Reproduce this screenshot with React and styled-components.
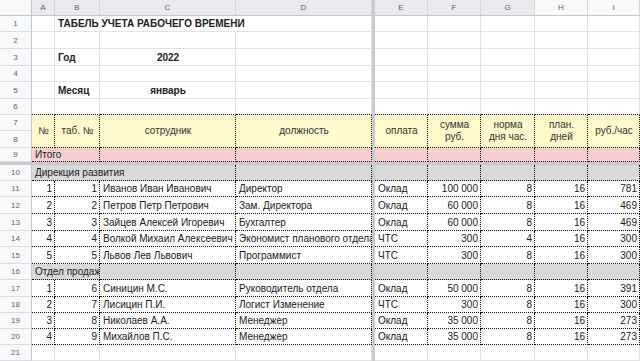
import React from 'react';
import styled, { createGlobalStyle } from 'styled-components';

const GlobalStyle = createGlobalStyle`
  html, body {
    margin: 0;
    padding: 0;
    background: #fff;
    overflow: hidden;
  }
  body {
    font-family: "Liberation Sans", Arial, sans-serif;
  }
`;

// grid line for each column letter (line 6 is the frozen divider)
const colLine = { A: 2, B: 3, C: 4, D: 5, E: 7, F: 8, G: 9, H: 10, I: 11, J: 12 };
// rows 1-9 sit above the frozen divider, 10+ below it
const rowLine = (n) => (n <= 9 ? n + 1 : n + 2);
const LETTERS = ['A', 'B', 'C', 'D', 'E', 'F', 'G', 'H', 'I', 'J'];

const tones = {
  head: '#fff9cc',
  total: '#f8cfcf',
  group: '#d9d9d9',
};

const Sheet = styled.div`
  display: grid;
  grid-template-columns: 32px 23px 45px 136px 136px 3px 53px 53px 54px 53px 52px 60px;
  grid-template-rows:
    16px
    16px 17px 17px 16px 17px 16px
    16px 17px 14px
    3px
    16px 16px 17px 17px 16px 17px 16px 17px 16px 16px 16px 16px;
  width: 700px;
  font-family: "Liberation Sans", Arial, sans-serif;
`;

const Corner = styled.div`
  grid-column: 1;
  grid-row: 1;
  background: #f8f9fa;
  border-right: 1px solid #c4c7c5;
  border-bottom: 1px solid #c4c7c5;
  box-sizing: border-box;
`;

const ColHead = styled.div`
  grid-column: ${(p) => p.$col};
  grid-row: 1;
  display: flex;
  align-items: center;
  justify-content: center;
  background: ${(p) => (p.$active ? '#e8eaed' : '#f8f9fa')};
  border-right: 1px solid #d3d5d7;
  border-bottom: 1px solid #c4c7c5;
  box-sizing: border-box;
  font-size: 8px;
  color: #5f6368;
`;

const RowHead = styled.div`
  grid-column: 1;
  grid-row: ${(p) => p.$row};
  display: flex;
  align-items: center;
  justify-content: center;
  background: #f8f9fa;
  border-right: 1px solid #c4c7c5;
  border-bottom: 1px solid #dadce0;
  box-sizing: border-box;
  font-size: 8px;
  color: #5f6368;
`;

const FrozenCol = styled.div`
  grid-column: 6;
  grid-row: 1 / -1;
  background: #c9cbce;
`;

const FrozenRow = styled.div`
  grid-column: 1 / -1;
  grid-row: 11;
  background: #c9cbce;
`;

const Cell = styled.div`
  grid-column: ${(p) => p.$col} / span ${(p) => p.$span || 1};
  grid-row: ${(p) => p.$row} / span ${(p) => p.$rows || 1};
  display: flex;
  align-items: center;
  justify-content: ${(p) =>
    p.$align === 'right' ? 'flex-end' : p.$align === 'center' ? 'center' : 'flex-start'};
  padding: 0 2px 0 3px;
  min-width: 0;
  box-sizing: border-box;
  overflow: hidden;
  white-space: nowrap;
  background: ${(p) => tones[p.$tone] || '#fff'};
  border-right: 1px ${(p) => (p.$dotted ? 'dotted #111' : 'solid #e2e3e3')};
  border-bottom: 1px ${(p) => (p.$dotted || p.$edge ? 'dotted #111' : 'solid #e2e3e3')};
  font-size: 10px;
  font-weight: ${(p) => (p.$bold ? 700 : 400)};
  color: #222;
`;

const HeadText = styled.span`
  white-space: normal;
  text-align: center;
  line-height: 12px;
  color: #333;
`;

const header = [
  ['A', '№'],
  ['B', 'таб. №'],
  ['C', 'сотрудник'],
  ['D', 'должность'],
  ['E', 'оплата'],
  ['F', ['сумма', 'руб.']],
  ['G', ['норма', 'дня час.']],
  ['H', ['план.', 'дней']],
  ['I', 'руб./час'],
];

const staff = [
  [11, 1, 1, 'Иванов Иван Иванович', 'Директор', 'Оклад', '100 000', 8, 16, 781],
  [12, 2, 2, 'Петров Петр Петрович', 'Зам. Директора', 'Оклад', '60 000', 8, 16, 469],
  [13, 3, 3, 'Зайцев Алексей Игоревич', 'Бухгалтер', 'Оклад', '60 000', 8, 16, 469],
  [14, 4, 4, 'Волкой Михаил Алексеевич', 'Экономист планового отдела', 'ЧТС', '300', 4, 16, 300],
  [15, 5, 5, 'Львов Лев Львович', 'Программист', 'ЧТС', '300', 8, 16, 300],
  [17, 1, 6, 'Синицин М.С.', 'Руководитель отдела', 'Оклад', '50 000', 8, 16, 391],
  [18, 2, 7, 'Лисицин П.И.', 'Логист Изменение', 'ЧТС', '300', 8, 16, 300],
  [19, 3, 8, 'Николаев А.А.', 'Менеджер', 'Оклад', '35 000', 8, 16, 273],
  [20, 4, 9, 'Михайлов П.С.', 'Менеджер', 'Оклад', '35 000', 8, 16, 273],
];

// a row of empty grid cells from a given column on
const blanks = (row, from, opts = {}) => {
  const start = LETTERS.indexOf(from);
  return LETTERS.slice(start).map((l) => (
    <Cell
      key={`${row}-${l}`}
      $row={rowLine(row)}
      $col={colLine[l]}
      $edge={opts.edge && l !== 'J'}
      $dotted={opts.dotted && l !== 'J'}
      $tone={l !== 'J' ? opts.tone : undefined}
    />
  ));
};

const App = () => {
  const rows = [];
  for (let n = 1; n <= 21; n++) rows.push(n);

  return (
    <>
      <GlobalStyle />
      <Sheet>
        <Corner />
        {LETTERS.map((l) => (
          <ColHead key={l} $col={colLine[l]} $active={'ABCDEFG'.includes(l)}>
            {l !== 'J' && l}
          </ColHead>
        ))}
        {rows.map((n) => (
          <RowHead key={n} $row={rowLine(n)}>
            {n}
          </RowHead>
        ))}
        <FrozenCol />
        <FrozenRow />

        {/* title block */}
        <Cell $row={rowLine(1)} $col={colLine.A} />
        <Cell $row={rowLine(1)} $col={colLine.B} $span={3} $bold>
          ТАБЕЛЬ УЧЕТА РАБОЧЕГО ВРЕМЕНИ
        </Cell>
        {blanks(1, 'E')}
        {blanks(2, 'A')}
        <Cell $row={rowLine(3)} $col={colLine.A} />
        <Cell $row={rowLine(3)} $col={colLine.B} $bold>Год</Cell>
        <Cell $row={rowLine(3)} $col={colLine.C} $bold $align="center">2022</Cell>
        {blanks(3, 'D')}
        {blanks(4, 'A')}
        <Cell $row={rowLine(5)} $col={colLine.A} />
        <Cell $row={rowLine(5)} $col={colLine.B} $bold>Месяц</Cell>
        <Cell $row={rowLine(5)} $col={colLine.C} $bold $align="center">январь</Cell>
        {blanks(5, 'D')}
        {blanks(6, 'A', { edge: true })}

        {/* table header */}
        {header.map(([l, t]) => (
          <Cell key={l} $row={rowLine(7)} $rows={2} $col={colLine[l]} $tone="head" $dotted $align="center">
            <HeadText>
              {Array.isArray(t) ? (
                <>
                  {t[0]}
                  <br />
                  {t[1]}
                </>
              ) : (
                t
              )}
            </HeadText>
          </Cell>
        ))}
        <Cell $row={rowLine(7)} $rows={2} $col={colLine.J} />

        {/* totals */}
        <Cell $row={rowLine(9)} $col={colLine.A} $span={2} $tone="total" $dotted>Итого</Cell>
        {blanks(9, 'C', { dotted: true, tone: 'total' })}

        {/* groups */}
        <Cell $row={rowLine(10)} $col={colLine.A} $span={3} $tone="group" $dotted>Дирекция развития</Cell>
        {blanks(10, 'D', { dotted: true, tone: 'group' })}
        <Cell $row={rowLine(16)} $col={colLine.A} $span={2} $tone="group" $dotted>Отдел продаж</Cell>
        {blanks(16, 'C', { dotted: true, tone: 'group' })}

        {/* staff rows */}
        {staff.map(([n, no, tab, name, pos, pay, sum, norm, days, rate]) => {
          const r = rowLine(n);
          return (
            <React.Fragment key={n}>
              <Cell $row={r} $col={colLine.A} $dotted $align="right">{no}</Cell>
              <Cell $row={r} $col={colLine.B} $dotted $align="right">{tab}</Cell>
              <Cell $row={r} $col={colLine.C} $dotted>{name}</Cell>
              <Cell $row={r} $col={colLine.D} $dotted>{pos}</Cell>
              <Cell $row={r} $col={colLine.E} $dotted>{pay}</Cell>
              <Cell $row={r} $col={colLine.F} $dotted $align="right">{sum}</Cell>
              <Cell $row={r} $col={colLine.G} $dotted $align="right">{norm}</Cell>
              <Cell $row={r} $col={colLine.H} $dotted $align="right">{days}</Cell>
              <Cell $row={r} $col={colLine.I} $dotted $align="right">{rate}</Cell>
              <Cell $row={r} $col={colLine.J} />
            </React.Fragment>
          );
        })}

        {blanks(21, 'A')}
      </Sheet>
    </>
  );
};

export default App;
